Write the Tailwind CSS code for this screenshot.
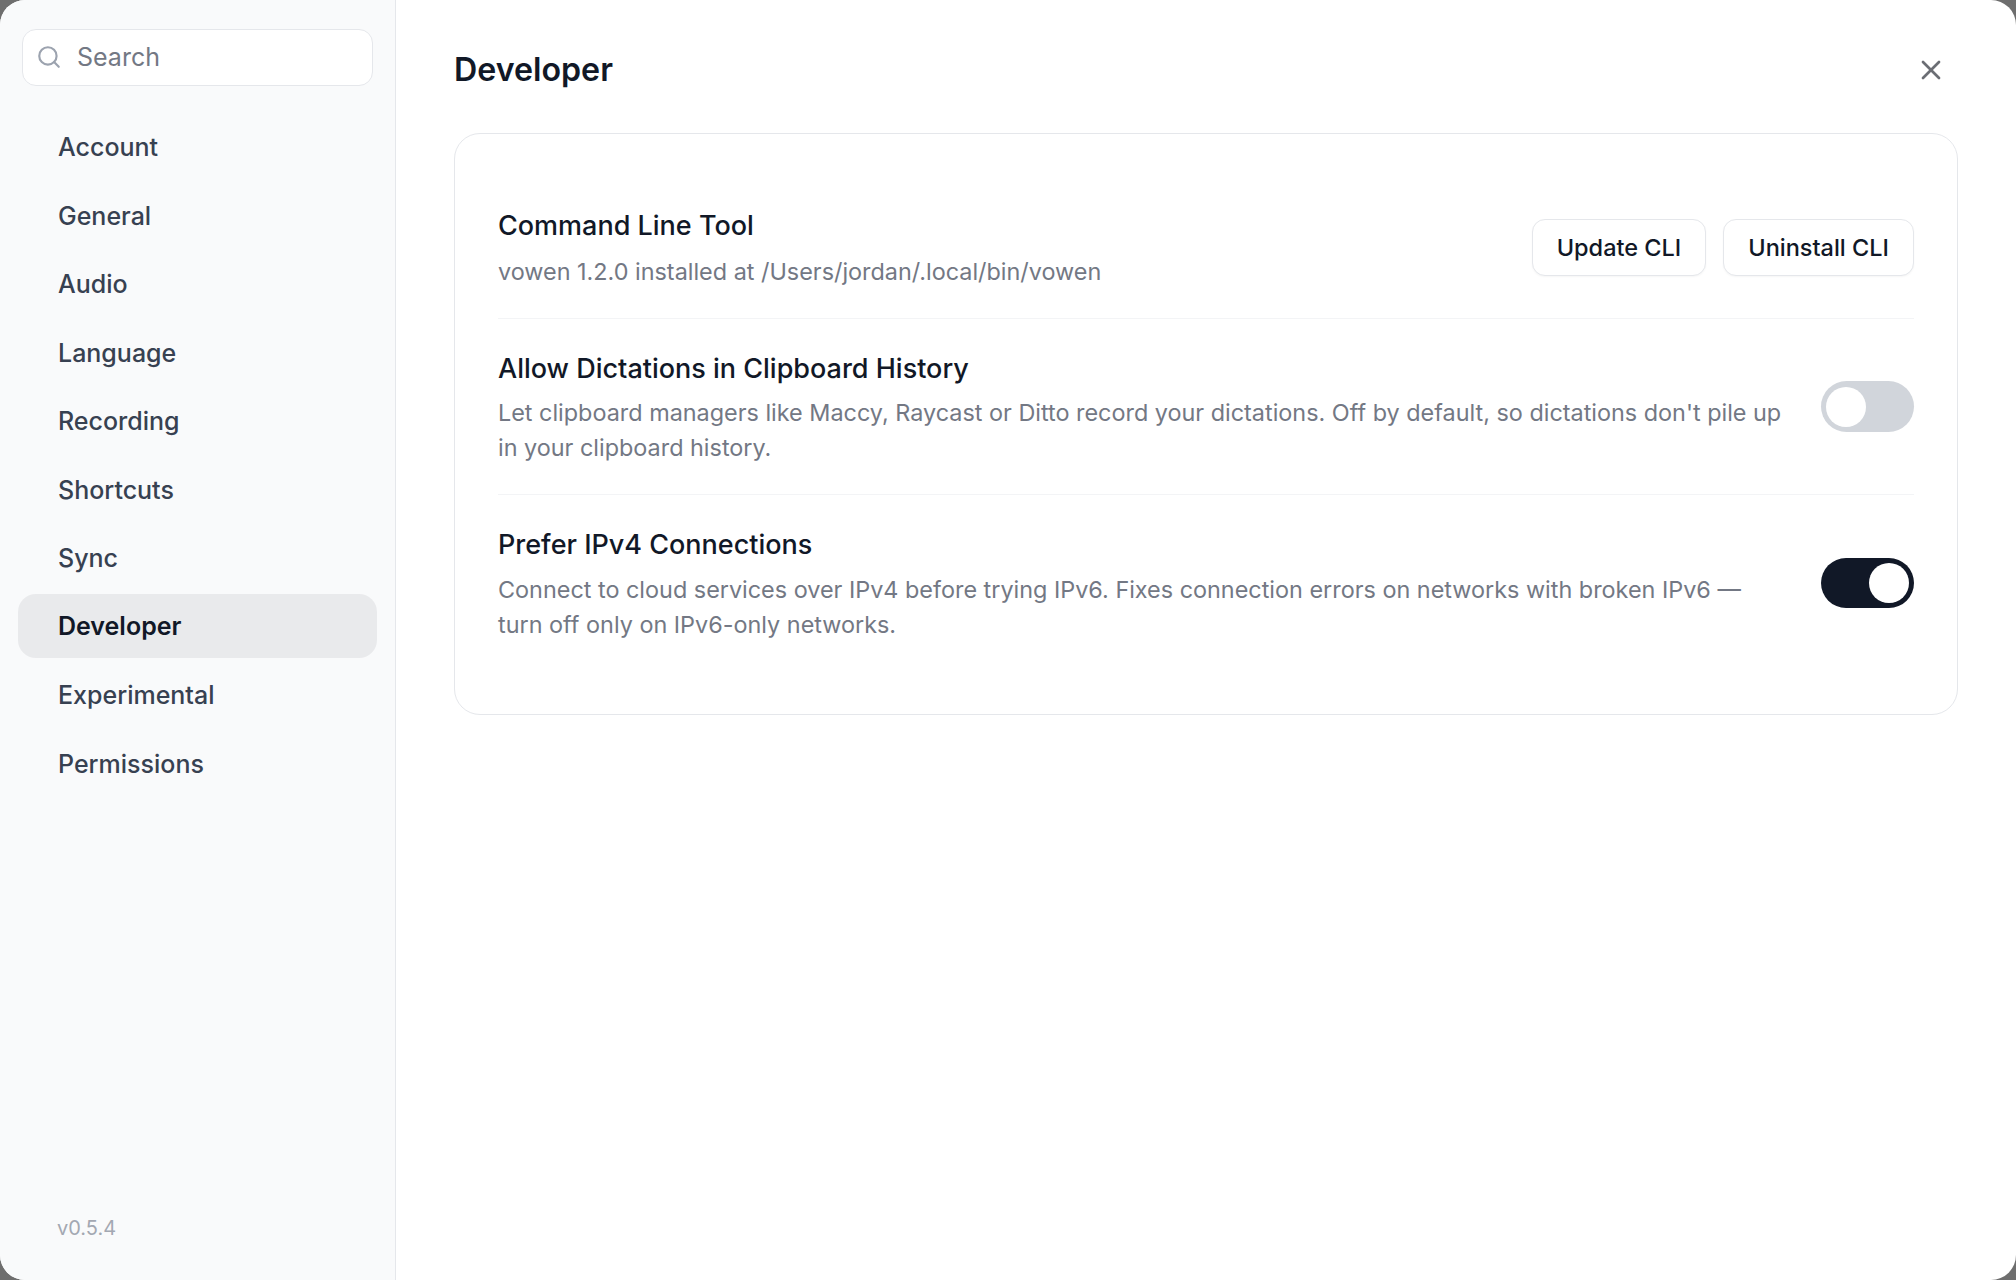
<!DOCTYPE html>
<html lang="en">
  <head>
    <meta charset="UTF-8" />
    <title>Settings | Developer</title>
    <script src="https://cdn.jsdelivr.net/npm/@tailwindcss/browser@4"></script>
  </head>
  <body class="bg-[#6e6e6e]">
    <div class="flex h-[1280px] w-[2016px] overflow-hidden rounded-[25px] bg-white font-['Inter',sans-serif]">
      <!-- Sidebar -->
      <aside class="flex w-[396px] shrink-0 flex-col border-r border-[#e5e7eb] bg-[#f9fafb] pb-[37px]">
        <div class="mx-[22px] mt-[29px] flex h-[57px] items-center rounded-[14px] border border-[#e5e7eb] bg-white pl-[13px]">
          <svg class="mb-[2px] h-[26px] w-[26px] text-[#9ca3af]" viewBox="0 0 24 24" fill="none" stroke="currentColor" stroke-width="2" stroke-linecap="round" stroke-linejoin="round">
            <circle cx="11" cy="11" r="8"></circle>
            <path d="m21 21-4.3-4.3"></path>
          </svg>
          <span class="ml-[15px] text-[25px] text-[#737884]">Search</span>
        </div>
        <nav class="mx-[18px] mt-[28.5px] flex flex-col gap-[4.5px] text-[25px] font-medium text-[#374151]">
          <a class="flex h-[64px] items-center px-[40px] pt-[3px]">Account</a>
          <a class="flex h-[64px] items-center px-[40px] pt-[3px]">General</a>
          <a class="flex h-[64px] items-center px-[40px] pt-[3px]">Audio</a>
          <a class="flex h-[64px] items-center px-[40px] pt-[3px]">Language</a>
          <a class="flex h-[64px] items-center px-[40px] pt-[3px]">Recording</a>
          <a class="flex h-[64px] items-center px-[40px] pt-[3px]">Shortcuts</a>
          <a class="flex h-[64px] items-center px-[40px] pt-[3px]">Sync</a>
          <a class="flex h-[64px] items-center rounded-[18px] bg-[#e9eaec] px-[40px] pt-[1px] font-semibold text-[#111827]">Developer</a>
          <a class="flex h-[64px] items-center px-[40px] pt-[3px]">Experimental</a>
          <a class="flex h-[64px] items-center px-[40px] pt-[3px]">Permissions</a>
        </nav>
        <div class="mt-auto pl-[57px] text-[20px] text-[#a3a8b2]">v0.5.4</div>
      </aside>

      <!-- Main -->
      <main class="flex-1 pl-[58px] pr-[58px]">
        <div class="flex h-[133px] items-start justify-between pt-[46px]">
          <h1 class="text-[32.2px] leading-[48px] font-semibold text-[#111827]">Developer</h1>
          <svg class="mt-[8px] mr-[11px] h-[32px] w-[32px] text-[#6b6e74]" viewBox="0 0 24 24" fill="none" stroke="currentColor" stroke-width="2" stroke-linecap="round" stroke-linejoin="round">
            <path d="M18 6 6 18"></path>
            <path d="m6 6 12 12"></path>
          </svg>
        </div>

        <section class="h-[582px] rounded-[26px] border border-[#e5e7eb] px-[43px] pt-[60px]">
          <div class="flex h-[125px] justify-between border-b border-[#f3f4f6]">
            <div class="pt-[16px]">
              <h2 class="text-[27px] leading-[32px] font-medium text-[#111827]">Command Line Tool</h2>
              <p class="mt-[12px] text-[23.4px] leading-[35px] text-[#737884]">vowen 1.2.0 installed at /Users/jordan/.local/bin/vowen</p>
            </div>
            <div class="mt-[25px] flex h-[57px] gap-[17px] text-[23.5px] font-medium text-[#111827]">
              <button class="rounded-[13px] border border-[#e5e7eb] bg-white px-[24px] shadow-[0_1px_2px_rgba(0,0,0,0.04)]">Update CLI</button>
              <button class="rounded-[13px] border border-[#e5e7eb] bg-white px-[24px] shadow-[0_1px_2px_rgba(0,0,0,0.04)]">Uninstall CLI</button>
            </div>
          </div>

          <div class="flex h-[176px] items-center justify-between gap-[38px] border-b border-[#f3f4f6]">
            <div class="flex-1 self-start pt-[33.5px]">
              <h2 class="text-[27px] leading-[32px] font-medium text-[#111827]">Allow Dictations in Clipboard History</h2>
              <p class="mt-[10px] text-[23.4px] leading-[35px] text-[#737884]">Let clipboard managers like Maccy, Raycast or Ditto record your dictations. Off by default, so dictations don't pile up in your clipboard history.</p>
            </div>
            <div class="flex h-[51px] w-[93px] shrink-0 items-center rounded-full bg-[#d1d5db] px-[5px]">
              <div class="h-[40px] w-[40px] rounded-full bg-white"></div>
            </div>
          </div>

          <div class="flex h-[176px] items-center justify-between gap-[38px]">
            <div class="flex-1 self-start pt-[33.5px]">
              <h2 class="text-[27px] leading-[32px] font-medium text-[#111827]">Prefer IPv4 Connections</h2>
              <p class="mt-[11px] text-[23.4px] leading-[35px] text-[#737884]">Connect to cloud services over IPv4 before trying IPv6. Fixes connection errors on networks with broken IPv6 — turn off only on IPv6-only networks.</p>
            </div>
            <div class="flex h-[50px] w-[93px] shrink-0 items-center justify-end rounded-full bg-[#111827] px-[5px]">
              <div class="h-[40px] w-[40px] rounded-full bg-white"></div>
            </div>
          </div>
        </section>
      </main>
    </div>
  </body>
</html>
